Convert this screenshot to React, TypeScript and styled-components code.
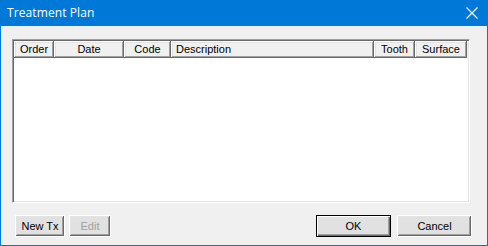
import styled, { createGlobalStyle } from 'styled-components';

const GlobalStyle = createGlobalStyle`
  html, body {
    margin: 0;
    padding: 0;
    background: #f0f0f0;
  }
`

type Column = {
  label: string;
  width: number;
  align: 'left' | 'center';
}

const columns: Column[] = [
  { label: 'Order', width: 40, align: 'center' },
  { label: 'Date', width: 70, align: 'center' },
  { label: 'Code', width: 47, align: 'center' },
  { label: 'Description', width: 203, align: 'left' },
  { label: 'Tooth', width: 41, align: 'center' },
  { label: 'Surface', width: 52, align: 'center' },
];

function App() {
  return (
    <Window>
      <GlobalStyle />
      <TitleBar>
        <Title>Treatment Plan</Title>
        <CloseIcon width="12" height="12" viewBox="0 0 12 12">
          <path d="M0.5 0.5 L11.5 11.5 M11.5 0.5 L0.5 11.5" stroke="#fff" strokeWidth="1.1" fill="none" />
        </CloseIcon>
      </TitleBar>
      <Content>
        <ListBox>
          <Header>
            {columns.map((col) => (
              <HeaderCell key={col.label} $width={col.width} $align={col.align}>
                {col.label}
              </HeaderCell>
            ))}
          </Header>
        </ListBox>
        <ButtonRow>
          <Group>
            <Button $width={50}>New Tx</Button>
            <Button $width={42} disabled>Edit</Button>
          </Group>
          <Group>
            <Button $width={75} $default>OK</Button>
            <Button $width={75}>Cancel</Button>
          </Group>
        </ButtonRow>
      </Content>
    </Window>
  );
}

const Window = styled.div`
  width: 488px;
  height: 246px;
  box-sizing: border-box;
  border: 1px solid #0078d7;
  border-top: none;
  background: #f0f0f0;
  display: flex;
  flex-direction: column;
  font-family: "Liberation Sans", Arial, sans-serif;
  font-size: 11px;
  color: #000;
`

const TitleBar = styled.div`
  height: 26px;
  margin: 0 -1px;
  background: #0078d7;
  display: flex;
  align-items: center;
  justify-content: space-between;
  padding: 0 10px 0 7px;
`

const Title = styled.span`
  color: #fff;
  font-family: "Open Sans", "Noto Sans", sans-serif;
  font-size: 12px;
  letter-spacing: 0.1px;
  margin-top: -1px;
`

const CloseIcon = styled.svg`
  display: block;
  margin-top: -1px;
`

const Content = styled.div`
  flex: 1;
  display: flex;
  flex-direction: column;
  padding: 13px 17px 7px 11px;
`

const ListBox = styled.div`
  height: 164px;
  box-sizing: border-box;
  background: #fff;
  border: 1px solid;
  border-color: #a0a0a0 #ffffff #ffffff #a0a0a0;
  box-shadow: inset 1px 1px #696969, inset -1px -1px #e3e3e3;
  padding: 1px;
`

const Header = styled.div`
  display: flex;
  height: 17px;
  background: #f0f0f0;
`

const HeaderCell = styled.div<{ $width: number; $align: 'left' | 'center' }>`
  width: ${props => props.$width}px;
  height: 17px;
  box-sizing: border-box;
  padding: ${props => props.$align === 'left' ? '0 0 0 5px' : '0'};
  text-align: ${props => props.$align};
  line-height: 17px;
  white-space: nowrap;
  box-shadow: inset -1px -1px #696969, inset 1px 1px #ffffff, inset -2px -2px #a0a0a0, inset 2px 2px #e3e3e3;
`

const ButtonRow = styled.div`
  margin-top: 12px;
  display: flex;
  justify-content: space-between;
  padding-left: 3px;
  margin-right: -2px;
`

const Group = styled.div`
  display: flex;
  gap: 4px;
  &:last-child {
    gap: 6px;
  }
`

const Button = styled.button<{ $width: number; $default?: boolean }>`
  width: ${props => props.$width}px;
  height: 22px;
  box-sizing: border-box;
  padding: 0;
  margin: 0;
  font-family: "Liberation Sans", Arial, sans-serif;
  font-size: 11px;
  color: #000;
  background: #e1e1e1;
  border: 1px solid ${props => props.$default ? '#000' : '#ffffff'};
  box-shadow: ${props => props.$default
    ? 'inset 1px 1px #fff, inset -1px -1px #696969, inset -2px -2px #a0a0a0'
    : 'inset -1px -1px #696969, inset 1px 1px #e3e3e3, inset -2px -2px #a0a0a0'};
  &:disabled {
    color: #a0a0a0;
  }
`

export default App;
